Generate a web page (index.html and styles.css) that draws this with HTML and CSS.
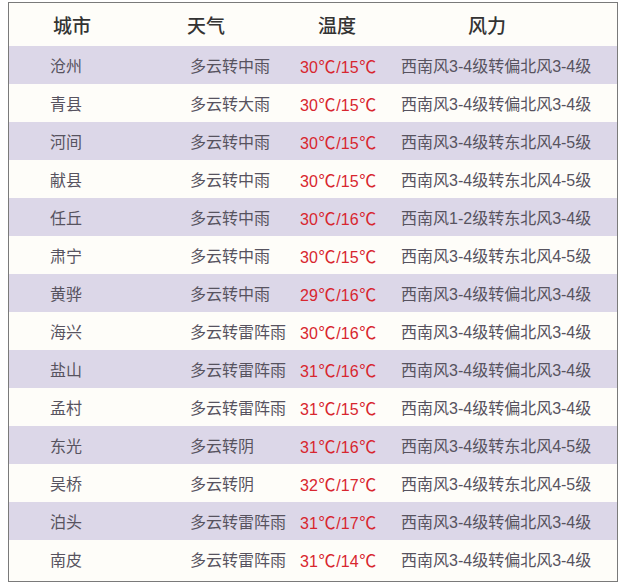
FILE: index.html
```html
<!DOCTYPE html>
<html lang="zh-CN">
<head>
<meta charset="utf-8">
<title>天气预报</title>
<link rel="stylesheet" href="styles.css">
</head>
<body>
<div class="table">
  <div class="row head">
    <div class="c1">城市</div><div class="c2">天气</div><div class="c3">温度</div><div class="c4">风力</div>
  </div>
  <div class="row alt"><div class="c1">沧州</div><div class="c2">多云转中雨</div><div class="c3">30<span class="deg">℃</span>/15<span class="deg">℃</span></div><div class="c4">西南风3-4级转偏北风3-4级</div></div>
  <div class="row"><div class="c1">青县</div><div class="c2">多云转大雨</div><div class="c3">30<span class="deg">℃</span>/15<span class="deg">℃</span></div><div class="c4">西南风3-4级转偏北风3-4级</div></div>
  <div class="row alt"><div class="c1">河间</div><div class="c2">多云转中雨</div><div class="c3">30<span class="deg">℃</span>/15<span class="deg">℃</span></div><div class="c4">西南风3-4级转东北风4-5级</div></div>
  <div class="row"><div class="c1">献县</div><div class="c2">多云转中雨</div><div class="c3">30<span class="deg">℃</span>/15<span class="deg">℃</span></div><div class="c4">西南风3-4级转东北风4-5级</div></div>
  <div class="row alt"><div class="c1">任丘</div><div class="c2">多云转中雨</div><div class="c3">30<span class="deg">℃</span>/16<span class="deg">℃</span></div><div class="c4">西南风1-2级转东北风3-4级</div></div>
  <div class="row"><div class="c1">肃宁</div><div class="c2">多云转中雨</div><div class="c3">30<span class="deg">℃</span>/15<span class="deg">℃</span></div><div class="c4">西南风3-4级转东北风4-5级</div></div>
  <div class="row alt"><div class="c1">黄骅</div><div class="c2">多云转中雨</div><div class="c3">29<span class="deg">℃</span>/16<span class="deg">℃</span></div><div class="c4">西南风3-4级转偏北风3-4级</div></div>
  <div class="row"><div class="c1">海兴</div><div class="c2">多云转雷阵雨</div><div class="c3">30<span class="deg">℃</span>/16<span class="deg">℃</span></div><div class="c4">西南风3-4级转偏北风3-4级</div></div>
  <div class="row alt"><div class="c1">盐山</div><div class="c2">多云转雷阵雨</div><div class="c3">31<span class="deg">℃</span>/16<span class="deg">℃</span></div><div class="c4">西南风3-4级转偏北风3-4级</div></div>
  <div class="row"><div class="c1">孟村</div><div class="c2">多云转雷阵雨</div><div class="c3">31<span class="deg">℃</span>/15<span class="deg">℃</span></div><div class="c4">西南风3-4级转偏北风3-4级</div></div>
  <div class="row alt"><div class="c1">东光</div><div class="c2">多云转阴</div><div class="c3">31<span class="deg">℃</span>/16<span class="deg">℃</span></div><div class="c4">西南风3-4级转东北风4-5级</div></div>
  <div class="row"><div class="c1">吴桥</div><div class="c2">多云转阴</div><div class="c3">32<span class="deg">℃</span>/17<span class="deg">℃</span></div><div class="c4">西南风3-4级转东北风4-5级</div></div>
  <div class="row alt"><div class="c1">泊头</div><div class="c2">多云转雷阵雨</div><div class="c3">31<span class="deg">℃</span>/17<span class="deg">℃</span></div><div class="c4">西南风3-4级转偏北风3-4级</div></div>
  <div class="row"><div class="c1">南皮</div><div class="c2">多云转雷阵雨</div><div class="c3">31<span class="deg">℃</span>/14<span class="deg">℃</span></div><div class="c4">西南风3-4级转偏北风3-4级</div></div>
</div>
</body>
</html>
```
FILE: styles.css
```css
html, body {
  margin: 0;
  padding: 0;
  background: #ffffff;
}

.table {
  box-sizing: border-box;
  width: 610px;
  margin: 2px 0 0 8px;
  border: 1px solid #7a7a7a;
  background: #fefdf9;
  padding-bottom: 3px;
  font-family: "Liberation Sans", "Noto Sans CJK SC", sans-serif;
  font-size: 16px;
  color: #57535f;
}

.row {
  display: grid;
  grid-template-columns: 178px 113px 100px 1fr;
  height: 38px;
  align-items: center;
  white-space: nowrap;
}

.row.alt {
  background: #dcd7e8;
}

.row .c1 { padding-left: 41px; }
.row .c2 { padding-left: 3px; }
.row .c3 { color: #d8262f; }
.row .c4 { padding-left: 1px; }

.deg {
  display: inline-block;
  width: 18.5px;
  font-family: "Noto Sans CJK SC", sans-serif;
  font-size: 17px;
  text-align: center;
}

.row.head {
  height: 43px;
  font-family: "Noto Sans CJK SC", sans-serif;
  font-size: 19px;
  font-weight: 500;
  color: #333333;
}

.row.head .c1 { padding-left: 44px; }
.row.head .c2 { padding-left: 0; }
.row.head .c3 { padding-left: 18px; color: #333333; }
.row.head .c4 { padding-left: 68px; }
```
